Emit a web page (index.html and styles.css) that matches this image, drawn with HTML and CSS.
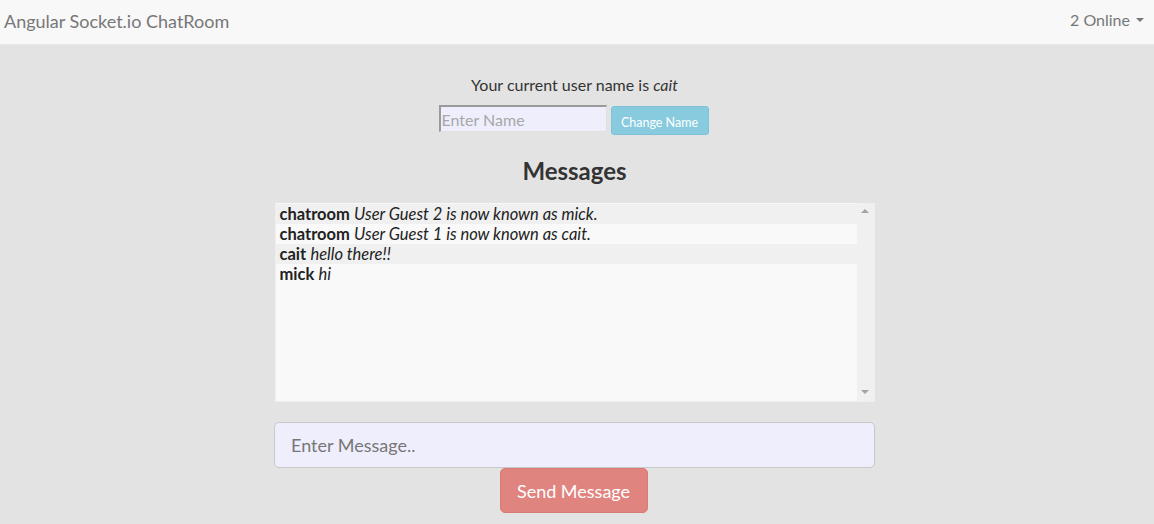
FILE: index.html
```html
<!DOCTYPE html>
<html>
<head>
<meta charset="utf-8">
<link rel="stylesheet" href="styles.css">
</head>
<body>
<nav class="navbar">
  <span class="brand">Angular Socket.io ChatRoom</span>
  <span class="online">2 Online <span class="caret"></span></span>
</nav>
<main class="main">
  <p class="current">Your current user name is <em>cait</em></p>
  <div class="name-form">
    <input class="name-input" type="text" placeholder="Enter Name">
    <button class="btn-info">Change Name</button>
  </div>
  <h2 class="heading">Messages</h2>
  <div class="box">
    <div class="list">
      <div class="row odd"><b>chatroom</b> <em>User Guest 2 is now known as mick.</em></div>
      <div class="row"><b>chatroom</b> <em>User Guest 1 is now known as cait.</em></div>
      <div class="row odd"><b>cait</b> <em>hello there!!</em></div>
      <div class="row"><b>mick</b> <em>hi</em></div>
    </div>
    <div class="scrollbar">
      <span class="arrow up"></span>
      <span class="arrow down"></span>
    </div>
  </div>
  <input class="msg-input" type="text" placeholder="Enter Message..">
  <button class="btn-send">Send Message</button>
</main>
</body>
</html>
```
FILE: styles.css
```css
* { box-sizing: border-box; }
html, body { margin: 0; padding: 0; }
body {
  background: #e3e3e3;
  font-family: Lato, "Open Sans", sans-serif;
  color: #333;
  width: 1154px;
  height: 524px;
  overflow: hidden;
}
.navbar {
  height: 45px;
  background: #f8f8f8;
  border-bottom: 1px solid #e7e7e7;
  display: flex;
  align-items: center;
  justify-content: space-between;
  padding: 0 10px 2px 4px;
}
.brand { font-size: 18px; color: #777; }
.online { font-size: 16px; color: #777; display: flex; align-items: center; gap: 6px; margin-top: -3px; }
.caret {
  width: 0; height: 0;
  border-left: 4px solid transparent;
  border-right: 4px solid transparent;
  border-top: 4px solid #777;
}
.main {
  display: flex;
  flex-direction: column;
  align-items: center;
  padding: 30px 5px 0 0;
}
.current { margin: 0; font-size: 16px; line-height: 20px; height: 20px; }
.name-form { display: flex; align-items: flex-start; gap: 4px; margin-top: 10px; margin-right: 2px; }
.name-input {
  width: 168px; height: 27px;
  background: #eeeefc;
  border-width: 2px 1px 1px 2px;
  border-color: #9a9a9a #e0e0e0 #e0e0e0 #9a9a9a;
  border-style: solid;
  font: 16px Lato, sans-serif;
  padding: 0 1px;
}
.name-input::placeholder { color: #a8a8a8; }
.btn-info {
  margin-top: 1px;
  width: 98px; height: 29px;
  background: #88cbdf;
  border: 1px solid #7dc2d8;
  border-radius: 3px;
  color: #fff;
  font: 12.5px Lato, sans-serif;
  padding: 3px 0 0;
}
.heading { margin: 21px 0 0; font-size: 24px; font-weight: bold; line-height: 30px; height: 30px; }
.box {
  margin-top: 17px;
  width: 600px; height: 199px;
  border: 1px solid #efefef;
  border-top: none;
  background: #f9f9f9;
  display: flex;
}
.list { flex: 1; padding-top: 1px; }
.row { height: 20px; line-height: 20px; padding-left: 4px; font-size: 16.5px; color: #222; background: #f9f9f9; }
.row.odd { background: #f0f0f0; }
.row b { font-weight: bold; }
.scrollbar {
  width: 17px;
  background: #f0f0f0;
  display: flex;
  flex-direction: column;
  justify-content: space-between;
  align-items: center;
  padding: 6px 0 7px;
}
.arrow { width: 0; height: 0; border-left: 4px solid transparent; border-right: 4px solid transparent; }
.arrow.up { border-bottom: 4px solid #a3a3a3; }
.arrow.down { border-top: 4px solid #a3a3a3; }
.msg-input {
  margin-top: 20px;
  width: 601px; height: 46px;
  background: #eeeefc;
  border: 1px solid #c8c8c8;
  border-radius: 5px;
  font: 18px Lato, sans-serif;
  padding: 0 16px;
}
.msg-input::placeholder { color: #777; }
.btn-send {
  width: 148px; height: 45px;
  margin-right: 2px;
  background: #e08480;
  border: 1px solid #d97a76;
  border-radius: 5px;
  color: #fff;
  font: 18px Lato, sans-serif;
  padding: 0;
}
```
